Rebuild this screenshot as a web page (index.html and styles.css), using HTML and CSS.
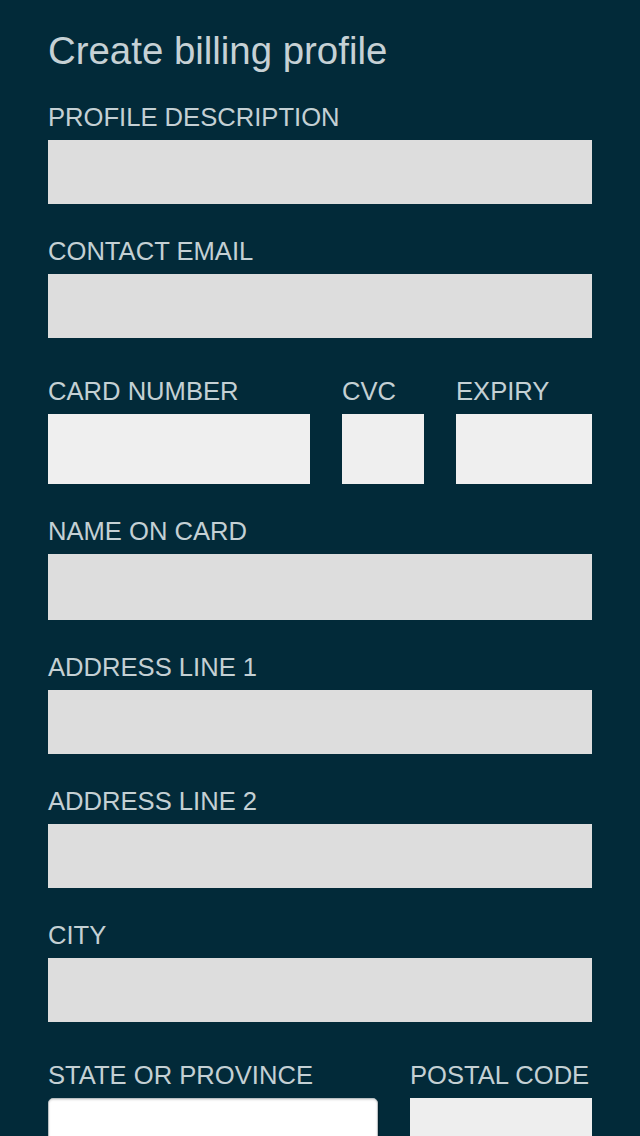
FILE: index.html
```html
<!DOCTYPE html>
<html lang="en">
<head>
<meta charset="utf-8">
<title>Create billing profile</title>
<link rel="stylesheet" href="styles.css">
</head>
<body>
<main class="page">
  <h1 class="title">Create billing profile</h1>
  <form class="form">
    <div class="field">
      <label class="label">PROFILE DESCRIPTION</label>
      <input class="input" type="text">
    </div>
    <div class="field">
      <label class="label">CONTACT EMAIL</label>
      <input class="input" type="text">
    </div>
    <div class="row row-card">
      <div class="field-inline">
        <label class="label">CARD NUMBER</label>
        <div class="input input-card"></div>
      </div>
      <div class="field-inline">
        <label class="label">CVC</label>
        <div class="input input-card"></div>
      </div>
      <div class="field-inline">
        <label class="label">EXPIRY</label>
        <div class="input input-card"></div>
      </div>
    </div>
    <div class="field">
      <label class="label">NAME ON CARD</label>
      <input class="input input-name" type="text">
    </div>
    <div class="field">
      <label class="label">ADDRESS LINE 1</label>
      <input class="input" type="text">
    </div>
    <div class="field">
      <label class="label">ADDRESS LINE 2</label>
      <input class="input" type="text">
    </div>
    <div class="field">
      <label class="label">CITY</label>
      <input class="input" type="text">
    </div>
    <div class="row row-state">
      <div class="field-inline">
        <label class="label">STATE OR PROVINCE</label>
        <div class="input input-select"></div>
      </div>
      <div class="field-inline">
        <label class="label">POSTAL CODE</label>
        <div class="input input-postal"></div>
      </div>
    </div>
  </form>
</main>
</body>
</html>
```

FILE: styles.css
```css
html, body {
  margin: 0;
  padding: 0;
  background: #022a39;
}

body {
  font-family: "Liberation Sans", Arial, sans-serif;
  color: #c4d0d4;
  overflow: hidden;
  height: 1136px;
}

.page {
  padding: 29px 48px 0;
}

.title {
  margin: 0 0 31px;
  font-size: 38.4px;
  line-height: 44px;
  font-weight: normal;
  color: #c6d1d5;
}

.form {
  display: flex;
  flex-direction: column;
}

.field {
  display: flex;
  flex-direction: column;
  margin-top: 34px;
}

.field:first-child {
  margin-top: 0;
}

.label {
  display: block;
  font-size: 25.6px;
  line-height: 26px;
  margin-bottom: 10px;
  white-space: nowrap;
}

.input {
  display: block;
  box-sizing: border-box;
  width: 100%;
  height: 64px;
  margin: 0;
  padding: 0;
  border: none;
  outline: none;
  background: #dddddd;
  font: inherit;
}

.input-name {
  height: 66px;
}

.row {
  display: grid;
  column-gap: 32px;
  margin-top: 40px;
}

.row-card {
  grid-template-columns: 262px 82px 136px;
}

.row-state {
  grid-template-columns: 330px 182px;
}

.field-inline {
  display: flex;
  flex-direction: column;
}

.input-card {
  height: 70px;
  background: #efefef;
}

.input-postal {
  height: 70px;
  background: #eeeeee;
}

.input-select {
  height: 70px;
  background: #ffffff;
  border: 1px solid #b9bfc2;
  border-radius: 5px;
  box-shadow: inset 0 1px 2px rgba(0, 0, 0, 0.15), 1px 1px 1px rgba(0, 0, 0, 0.25);
}
```
